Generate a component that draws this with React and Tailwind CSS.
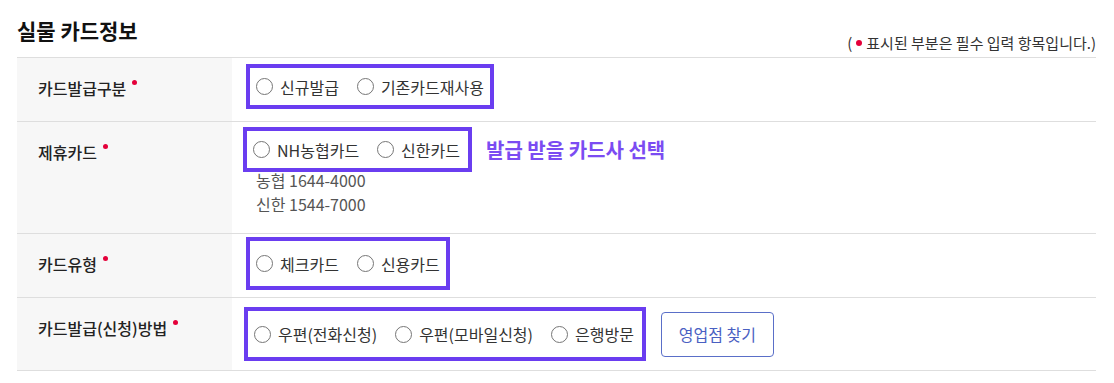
import React from "react";

const font = { fontFamily: '"Noto Sans CJK KR", "Noto Sans", sans-serif' };

function Dot() {
  return <span className="ml-[6px] inline-block h-[5px] w-[5px] -translate-y-[6px] rounded-full bg-[#e4003a]"></span>;
}

function Radio({ label }) {
  return (
    <label className="flex items-center gap-[7px] text-[16px] text-[#333]">
      <span className="inline-block h-[17px] w-[17px] rounded-full border border-[#767676] bg-white"></span>
      <span>{label}</span>
    </label>
  );
}

function Box({ items, className = "" }) {
  return (
    <div className={`inline-flex items-center gap-[18px] border-4 border-[#6a3df0] px-[6px] ${className}`}>
      {items.map((it) => (
        <Radio key={it} label={it} />
      ))}
    </div>
  );
}

function Row({ label, children, className = "" }) {
  return (
    <div className="flex border-b border-[#dedede]">
      <div className="w-[215px] shrink-0 bg-[#f7f7f7] pl-[21px] pt-[18px]">
        <div className="flex items-center text-[16px] font-medium text-[#222]">
          <span>{label}</span>
          <Dot />
        </div>
      </div>
      <div className={`flex-1 pl-[14px] ${className}`}>{children}</div>
    </div>
  );
}

export default function App() {
  return (
    <div className="w-[1114px] bg-white pl-[17px] pr-[18px]" style={font}>
      <div className="flex items-end justify-between pt-[14px]">
        <h2 className="text-[21px] font-bold leading-[32px] text-[#111]">실물 카드정보</h2>
        <p className="mb-[-8px] flex items-center text-[15px] text-[#333]">
          (
          <span className="mx-[4px] inline-block h-[6px] w-[6px] rounded-full bg-[#e4003a]"></span>
          표시된 부분은 필수 입력 항목입니다.)
        </p>
      </div>

      <div className="mt-[11px] border-t border-[#dedede]">
        <Row label="카드발급구분" className="h-[63px] pt-[6px]">
          <Box items={["신규발급", "기존카드재사용"]} className="h-[45px] pr-[6px]" />
        </Row>

        <Row label="제휴카드" className="h-[111px] pt-[5px]">
          <div className="flex items-center">
            <Box items={["NH농협카드", "신한카드"]} className="-ml-[3px] h-[45px] pr-[8px]" />
            <span className="ml-[14px] text-[20px] font-bold text-[#7b4cf2]">발급 받을 카드사 선택</span>
          </div>
          <div className="mt-[-4px] pl-[10px] text-[16px] leading-[24px] text-[#555]">
            <p>농협 1644-4000</p>
            <p>신한 1544-7000</p>
          </div>
        </Row>

        <Row label="카드유형" className="h-[63px] pt-[3px]">
          <Box items={["체크카드", "신용카드"]} className="h-[53px] pr-[6px]" />
        </Row>

        <Row label="카드발급(신청)방법" className="h-[72px] pt-[9px]">
          <div className="flex items-center gap-[15px]">
            <Box items={["우편(전화신청)", "우편(모바일신청)", "은행방문"]} className="-ml-[2px] h-[54px] pr-[8px]" />
            <button className="h-[45px] w-[113px] rounded-[4px] border border-[#5a6fc8] text-[16px] text-[#4a60c2]">
              영업점 찾기
            </button>
          </div>
        </Row>
      </div>
    </div>
  );
}
